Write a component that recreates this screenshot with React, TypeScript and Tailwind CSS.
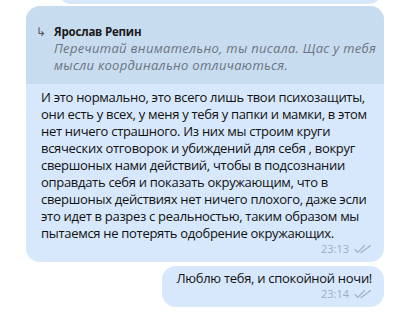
import { Fragment } from 'react';

const font = { fontFamily: '"Open Sans", "Noto Sans", sans-serif' };

const bodyLines = [
  'И это нормально, это всего лишь твои психозащиты,',
  'они есть у всех, у меня у тебя у папки и мамки, в этом',
  'нет ничего страшного. Из них мы строим круги',
  'всяческих отговорок и убиждений для себя , вокруг',
  'свершоных нами действий, чтобы в подсознании',
  'оправдать себя и показать окружающим, что в',
  'свершоных действиях нет ничего плохого, даже эсли',
  'это идет в разрез с реальностью, таким образом мы',
  'пытаемся не потерять одобрение окружающих.',
];

function Ticks() {
  return (
    <svg width="18" height="10" viewBox="0 0 18 10" fill="none" stroke="#9fb0c2" strokeWidth="1.2" strokeLinecap="round" strokeLinejoin="round">
      <path d="M1 5.5 L3.8 8.3 L10.5 1.5" />
      <path d="M7 8.3 L7.5 8.3 L16.5 1.5" />
    </svg>
  );
}

function Meta({ time }: { time: string }) {
  return (
    <div className="flex items-center justify-end gap-[5px] text-[11px] leading-[14px] text-[#a0adba]">
      <span>{time}</span>
      <Ticks />
    </div>
  );
}

export default function App() {
  return (
    <div className="w-[406px] h-[321px] overflow-hidden bg-white flex flex-col" style={font}>
      <div className="ml-[60px] w-[320px] h-[20px] -mt-[16px] rounded-b-[10px] bg-[#d7e8fc] shrink-0" />

      <div className="mt-[2px] ml-[26px] w-[358px] rounded-[14px] overflow-hidden bg-[#d7e8fc] shrink-0">
        <div className="bg-[#c8dcf0] pt-[17px] pb-[10px] pl-[10px] pr-[10px] flex">
          <div className="w-[18px] shrink-0 text-[12px] leading-[17px] text-[#555]">↳</div>
          <div className="min-w-0">
            <div className="text-[11.5px] leading-[17px] font-bold tracking-[-0.2px] text-[#1a1a1a]">Ярослав Репин</div>
            <div className="text-[13px] leading-[17px] tracking-[0.3px] italic text-[#6b7480] whitespace-nowrap">
              <div className="h-[17px]">Перечитай внимательно, ты писала. Щас у тебя</div>
              <div className="h-[17px]">мысли координально отличаються.</div>
            </div>
          </div>
        </div>
        <div className="px-[15px] pt-[5px] text-[13px] leading-[17px] tracking-[-0.3px] text-[#111] whitespace-nowrap">
          {bodyLines.map((l, i) => (
            <Fragment key={i}>
              {l}
              {i < bodyLines.length - 1 && <br />}
            </Fragment>
          ))}
        </div>
        <div className="pr-[12px] pb-[6px]">
          <Meta time="23:13" />
        </div>
      </div>

      <div className="self-end mr-[22px] mt-[4px] rounded-[14px] bg-[#d7e8fc] pl-[14px] pr-[12px] pt-[4px] pb-[6px] shrink-0">
        <div className="text-[13px] leading-[17px] tracking-[-0.3px] text-[#111] whitespace-nowrap">Люблю тебя, и спокойной ночи!</div>
        <Meta time="23:14" />
      </div>
    </div>
  );
}
